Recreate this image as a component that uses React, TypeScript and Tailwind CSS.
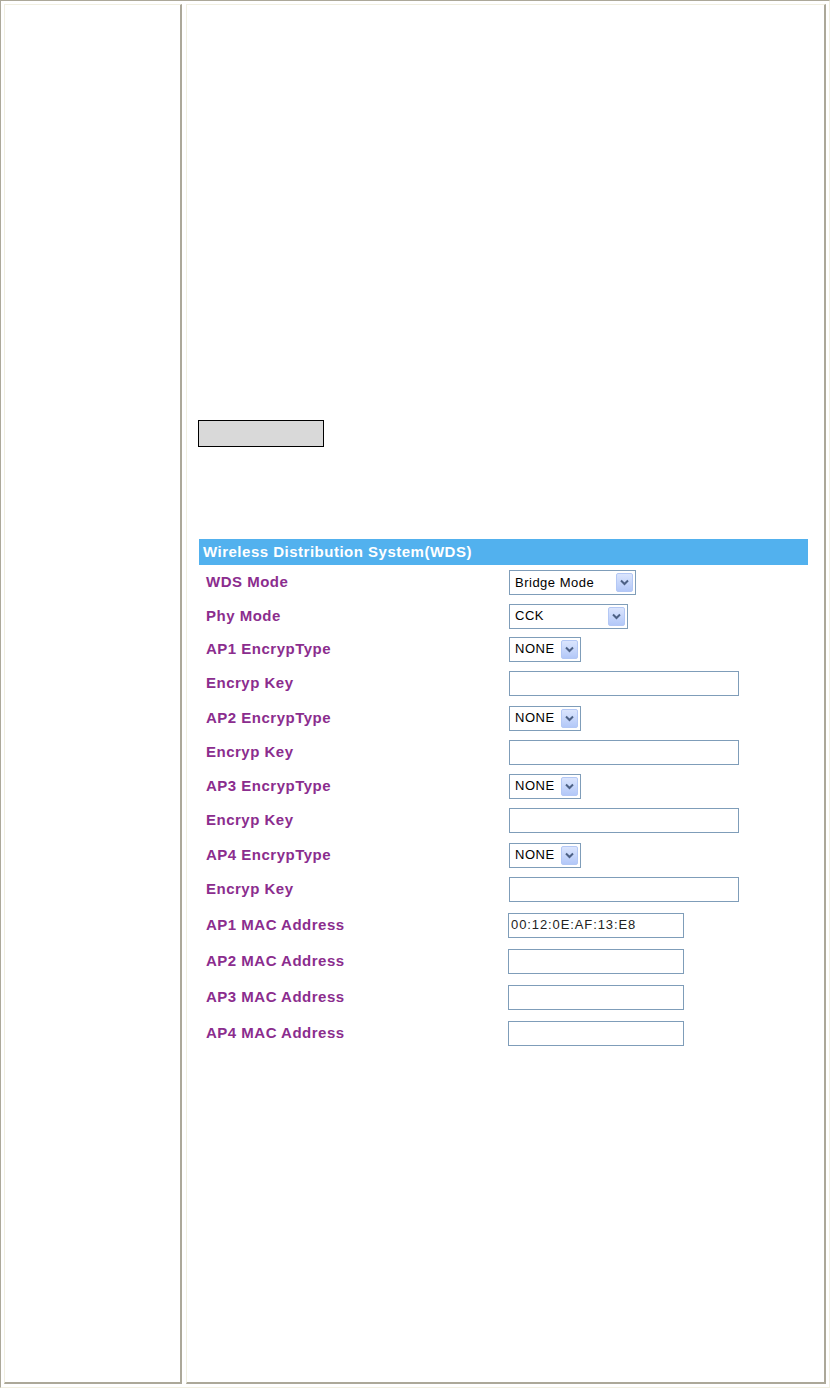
const FONT = { fontFamily: '"Liberation Sans", Arial, sans-serif' };

type Row = { label: string; kind: 'select' | 'input'; value?: string; w: number; h: number; x?: number };

const ROWS: Row[] = [
  { label: 'WDS Mode', kind: 'select', value: 'Bridge Mode', w: 127, h: 35 },
  { label: 'Phy Mode', kind: 'select', value: 'CCK', w: 119, h: 32 },
  { label: 'AP1 EncrypType', kind: 'select', value: 'NONE', w: 72, h: 34 },
  { label: 'Encryp Key', kind: 'input', w: 230, h: 35 },
  { label: 'AP2 EncrypType', kind: 'select', value: 'NONE', w: 72, h: 34 },
  { label: 'Encryp Key', kind: 'input', w: 230, h: 34 },
  { label: 'AP3 EncrypType', kind: 'select', value: 'NONE', w: 72, h: 34 },
  { label: 'Encryp Key', kind: 'input', w: 230, h: 35 },
  { label: 'AP4 EncrypType', kind: 'select', value: 'NONE', w: 72, h: 34 },
  { label: 'Encryp Key', kind: 'input', w: 230, h: 35 },
  { label: 'AP1 MAC Address', kind: 'input', value: '00:12:0E:AF:13:E8', w: 176, h: 36, x: -1 },
  { label: 'AP2 MAC Address', kind: 'input', w: 176, h: 36, x: -1 },
  { label: 'AP3 MAC Address', kind: 'input', w: 176, h: 36, x: -1 },
  { label: 'AP4 MAC Address', kind: 'input', w: 176, h: 36, x: -1 },
];

function Chevron() {
  return (
    <svg width="9" height="7" viewBox="0 0 9 7">
      <path d="M1 1.5 L4.5 5 L8 1.5" fill="none" stroke="#4d6185" strokeWidth="2" />
    </svg>
  );
}

function Select({ value, w }: { value: string; w: number }) {
  return (
    <div
      className="h-[25px] border border-[#7f9db9] bg-white flex items-center justify-between pl-[5px] pr-[2px]"
      style={{ width: w }}
    >
      <span className="text-[13px] tracking-[0.5px] text-black">{value}</span>
      <div className="w-[17px] h-[19px] rounded-[2px] border border-[#b4c8f5] bg-gradient-to-b from-[#dbe5fd] to-[#b3c8f8] flex items-center justify-center">
        <Chevron />
      </div>
    </div>
  );
}

function TextInput({ value, w }: { value?: string; w: number }) {
  return (
    <div
      className="h-[25px] border border-[#7f9db9] bg-white flex items-center pl-[2px]"
      style={{ width: w }}
    >
      <span className="text-[13px] tracking-[0.9px] text-[#222]">{value}</span>
    </div>
  );
}

export default function App() {
  return (
    <div style={FONT} className="w-[830px] h-[1388px] bg-white border-t border-l border-t-[#aca899] border-l-[#aca899] border-b border-r border-b-[#f1efe2] border-r-[#f1efe2] p-[3px] flex gap-[4px]">
      {/* left cell */}
      <div className="w-[178px] h-full border-t border-l border-t-[#f1efe2] border-l-[#f1efe2] border-b-2 border-r-2 border-b-[#aca899] border-r-[#aca899]" />

      {/* right cell */}
      <div className="flex-1 h-full border-t border-l border-t-[#f1efe2] border-l-[#f1efe2] border-b-2 border-r-2 border-b-[#aca899] border-r-[#aca899]">
        <div className="ml-[11px] mt-[415px] w-[126px] h-[27px] bg-[#d9d9d9] border border-black" />

        <div className="ml-[12px] mt-[92px] w-[609px]">
          <div className="h-[26px] bg-[#52b1ee] flex items-center pl-[4px]">
            <span className="text-white font-bold text-[15px] tracking-[0.5px]">Wireless Distribution System(WDS)</span>
          </div>
          {ROWS.map((r, i) => (
            <div key={i} className="flex items-center" style={{ height: r.h }}>
              <div className="w-[310px] pl-[7px] text-[15px] font-bold tracking-[0.5px] text-[#8b2d8e]">{r.label}</div>
              <div style={{ marginLeft: r.x ?? 0 }}>
                {r.kind === 'select' ? <Select value={r.value!} w={r.w} /> : <TextInput value={r.value} w={r.w} />}
              </div>
            </div>
          ))}
        </div>
      </div>
    </div>
  );
}
